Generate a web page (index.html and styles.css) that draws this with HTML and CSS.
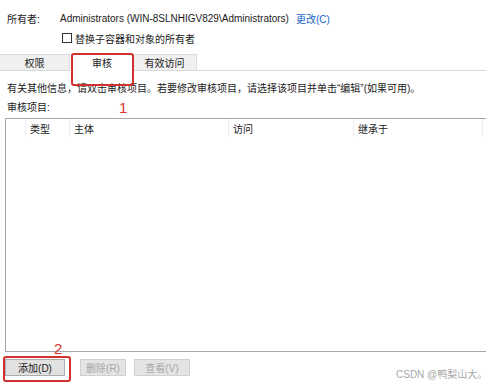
FILE: index.html
```html
<!DOCTYPE html>
<html lang="zh-CN">
<head>
  <meta charset="UTF-8" />
  <title>审核</title>
  <link rel="stylesheet" href="styles.css">
</head>
<body>

  <!-- Owner -->
  <div class="owner">
    <span class="owner-label">所有者:</span>
    <span class="owner-name">Administrators (WIN-8SLNHIGV829\Administrators)</span>
    <a class="change-link">更改(C)</a>
  </div>
  <div class="replace-row">
    <span class="checkbox"></span>
    <span>替换子容器和对象的所有者</span>
  </div>

  <!-- Tabs -->
  <div class="tabs">
    <div class="tab">权限</div>
    <div class="tab active">审核</div>
    <div class="tab">有效访问</div>
    <div class="tab-rest"></div>
  </div>

  <p class="info">有关其他信息，请双击审核项目。若要修改审核项目，请选择该项目并单击“编辑”(如果可用)。</p>
  <p class="list-label">审核项目:</p>

  <!-- Audit entries -->
  <div class="entries">
    <div class="entries-head">
      <div class="col col-icon"></div>
      <div class="col col-type">类型</div>
      <div class="col col-principal">主体</div>
      <div class="col col-access">访问</div>
      <div class="col col-inherit">继承于</div>
      <div class="col col-more"></div>
    </div>
  </div>

  <div class="buttons">
    <button class="btn btn-add">添加(D)</button>
    <button class="btn btn-remove" disabled>删除(R)</button>
    <button class="btn btn-view" disabled>查看(V)</button>
  </div>

  <div class="watermark">CSDN @鸭梨山大。</div>

  <!-- annotations -->
  <div class="mark mark-tab"></div>
  <div class="mark mark-add"></div>
  <div class="step step-1">1</div>
  <div class="step step-2">2</div>

</body>
</html>
```

FILE: styles.css
```css
body {
  margin: 0;
  background: #fff;
  font-family: "Liberation Sans", "Noto Sans CJK SC", sans-serif;
  font-size: 10px;
  color: #1a1a1a;
  position: relative;
  width: 486px;
  height: 385px;
  overflow: hidden;
}

.owner {
  display: flex;
  align-items: center;
  height: 14px;
  padding: 11px 0 0 7px;
}
.owner-label {
  width: 53px;
}
.change-link {
  color: #1a64c8;
  margin-left: 7px;
}

.replace-row {
  display: flex;
  align-items: center;
  gap: 3px;
  height: 12px;
  margin: 7px 0 0 62px;
}
.checkbox {
  width: 8px;
  height: 8px;
  border: 1px solid #333;
  background: #fff;
}

.tabs {
  display: flex;
  margin-top: 10px;
  height: 17px;
}
.tab {
  display: flex;
  align-items: center;
  justify-content: center;
  background: #f0f0f0;
  border: 1px solid #dcdcdc;
  border-bottom-color: #d9d9d9;
  box-sizing: border-box;
  color: #222;
}
.tab:first-child {
  width: 70px;
  border-left: none;
}
.tab.active {
  width: 62px;
  background: #fff;
  border-bottom-color: #fff;
  margin-left: 1px;
}
.tab:nth-child(3) {
  width: 64px;
  border-left: none;
}
.tab-rest {
  flex: 1;
  border-bottom: 1px solid #d9d9d9;
}

.info {
  margin: 12px 0 0 7px;
  line-height: 12px;
}
.list-label {
  margin: 7px 0 0 7px;
  line-height: 12px;
}

.entries {
  margin: 4px 0 0 5px;
  width: 500px;
  height: 232px;
  border: 1px solid #a8a8a8;
  border-right: none;
}
.entries-head {
  display: flex;
  height: 18px;
}
.col {
  display: flex;
  align-items: center;
  padding-left: 4px;
  border-right: 1px solid #ececec;
  box-sizing: border-box;
}
.col-icon { width: 20px; padding: 0; }
.col-type { width: 44px; }
.col-principal { width: 159px; }
.col-access { width: 125px; }
.col-inherit { width: 129px; }
.col-more { flex: 1; border-right: none; }

.buttons {
  display: flex;
  margin: 7px 0 0 5px;
}
.btn {
  height: 17px;
  padding: 0;
  font: inherit;
  background: #e1e1e1;
  border: 1px solid #adadad;
  color: #1a1a1a;
}
.btn-add { width: 60px; }
.btn-remove { width: 46px; margin-left: 15px; }
.btn-view { width: 56px; margin-left: 8px; }
.btn:disabled {
  background: #e4e4e4;
  border-color: #d0d0d0;
  color: #a6a6a6;
}

.watermark {
  position: absolute;
  left: 396px;
  top: 366px;
  color: #a8a8a8;
  font-size: 10px;
  white-space: nowrap;
}

.mark {
  position: absolute;
  border: 2px solid #d2322d;
  border-radius: 3px;
}
.mark-tab {
  left: 71px;
  top: 53px;
  width: 59px;
  height: 29px;
}
.mark-add {
  left: 3px;
  top: 356px;
  width: 64px;
  height: 22px;
}
.step {
  position: absolute;
  color: #d2322d;
  font-size: 15px;
  line-height: 15px;
}
.step-1 { left: 119px; top: 100px; }
.step-2 { left: 54px; top: 341px; }
```
